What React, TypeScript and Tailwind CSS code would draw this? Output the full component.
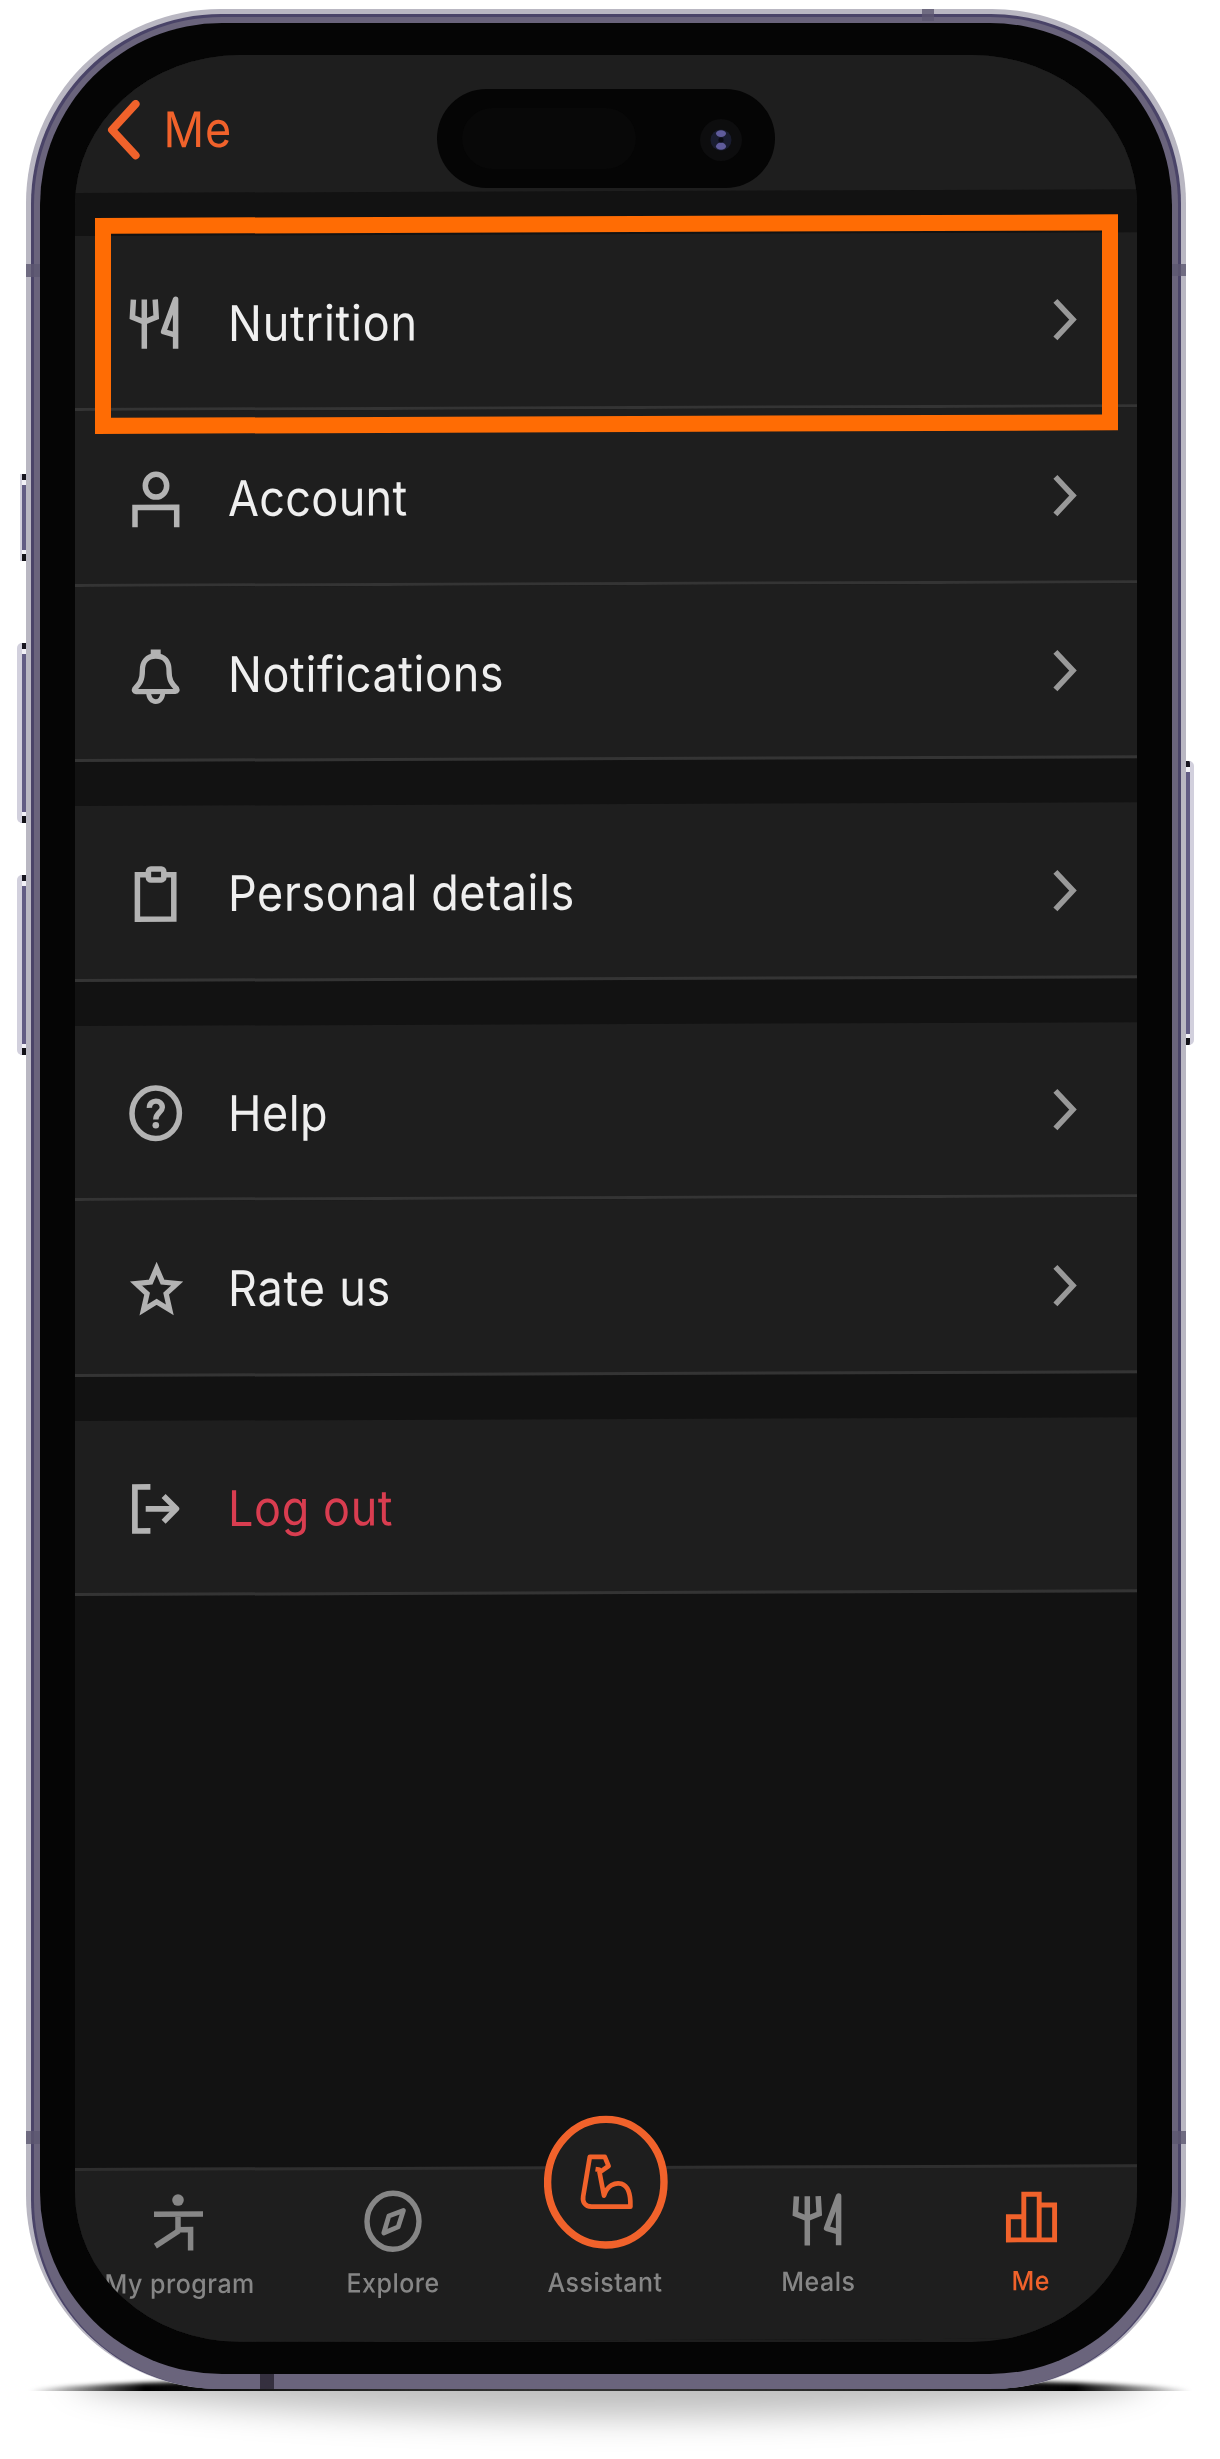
import React from "react";

type IconProps = { className?: string };

const svgBase = {
  fill: "none",
  stroke: "currentColor",
  strokeWidth: 5.5,
} as const;

function CutleryIcon({ className = "h-[60px] w-[60px]" }: IconProps) {
  return (
    <svg viewBox="0 0 60 60" className={`shrink-0 overflow-visible ${className}`} {...svgBase}>
      <path d="M8.4 6.8 L7.4 24.4 L19.3 29.2 L31.2 24.4 L30.2 6.8 M19.3 6.8 V56" />
      <path d="M50.6 56 V6.6 L38.6 38.9 L50.6 42.5" strokeLinejoin="round" />
    </svg>
  );
}

function AccountIcon() {
  return (
    <svg viewBox="0 0 60 60" className="h-[60px] w-[60px] shrink-0 overflow-visible" {...svgBase}>
      <ellipse cx="31" cy="17" rx="10.7" ry="11.4" />
      <path d="M10 58.5 V38.6 H51.7 V58.5" />
    </svg>
  );
}

function BellIcon() {
  return (
    <svg viewBox="0 0 60 60" className="h-[60px] w-[60px] shrink-0 overflow-visible" {...svgBase} strokeWidth={5.3}>
      <path d="M25.7 5.8 H35.7 V13 H25.7 Z" fill="currentColor" stroke="none" />
      <path
        d="M30.7 12.3 C22 12.3 17.4 18 17.4 26.5 C17.4 36.5 15 39.5 9.8 45 C9 46.5 9.5 47.8 11 47.8 H50.4 C51.9 47.8 52.4 46.5 51.6 45 C46.4 39.5 44 36.5 44 26.5 C44 18 39.4 12.3 30.7 12.3 Z"
        strokeLinejoin="round"
      />
      <path d="M23.6 48.5 C23.6 61 37.8 61 37.8 48.5" strokeWidth={4.8} />
    </svg>
  );
}

function ClipboardIcon() {
  return (
    <svg viewBox="0 0 60 60" className="h-[60px] w-[60px] shrink-0 overflow-visible" {...svgBase}>
      <path d="M22.5 11 H12.4 V55.4 H48.8 V11 H39.5" />
      <rect x="23.4" y="5.2" width="15.4" height="11" rx="2.5" />
    </svg>
  );
}

function HelpIcon() {
  return (
    <svg viewBox="0 0 60 60" className="h-[60px] w-[60px] shrink-0 overflow-visible" {...svgBase}>
      <ellipse cx="30.7" cy="30.6" rx="23.7" ry="25.2" />
      <path d="M24.4 25.1 C24.2 16.2 37.5 16.2 37.3 24.8 C37.2 29.6 30.8 29.8 30.8 36.8" strokeWidth={5.4} />
      <circle cx="30.8" cy="42.6" r="3.3" fill="currentColor" stroke="none" />
    </svg>
  );
}

function StarIcon() {
  return (
    <svg viewBox="0 0 60 60" className="h-[60px] w-[60px] shrink-0 overflow-visible" {...svgBase} strokeWidth={5.2}>
      <path d="M31.6 9.6 L37.5 23.4 L52.2 24.8 L41.1 35 L44.8 51.2 L31.6 43 L18.4 51.2 L22.1 35 L11 24.8 L25.7 23.4 Z" />
    </svg>
  );
}

function LogoutIcon() {
  return (
    <svg viewBox="0 0 60 60" className="h-[60px] w-[60px] shrink-0 overflow-visible" {...svgBase} strokeWidth={5.7}>
      <path d="M25.4 9.2 H9.9 V53.2 H25.4" />
      <path d="M20.7 31.2 H52" />
      <path d="M38.6 18.4 L51.4 31.2 L38.6 44" strokeLinejoin="round" />
    </svg>
  );
}

function RowChevron() {
  return (
    <svg viewBox="0 0 24 42" className="h-[42px] w-[24px] shrink-0 overflow-visible text-[#999999]" {...svgBase}>
      <path d="M2.4 2.2 L20 21 L2.4 39.8" />
    </svg>
  );
}

function ProgramIcon() {
  return (
    <svg viewBox="0 0 66 66" className="h-[66px] w-[66px] overflow-visible" {...svgBase}>
      <circle cx="31" cy="11.4" r="5.8" fill="currentColor" stroke="none" />
      <path d="M7 25.5 H56 M31 25.5 V42.5 M31 41 H43.6 V62" />
      <path d="M32 42 L8.4 57.4" />
    </svg>
  );
}

function CompassIcon() {
  return (
    <svg viewBox="0 0 66 66" className="h-[66px] w-[66px] overflow-visible" {...svgBase} strokeWidth={5.4}>
      <ellipse cx="33" cy="33.4" rx="26" ry="28" />
      <path d="M43.4 22.6 L38.2 39 L23.8 45 L28.8 28.2 Z" strokeWidth={4.8} strokeLinejoin="round" />
    </svg>
  );
}

function BarsIcon() {
  return (
    <svg viewBox="0 0 66 66" className="h-[66px] w-[66px] overflow-visible" {...svgBase} strokeWidth={4.9}>
      <path d="M10.4 31 H25.8 V54.2 H10.4 Z M25.8 8.6 H41.2 V54.2 H25.8 Z M41.2 19.4 H56.6 V54.2 H41.2 Z" />
    </svg>
  );
}

function AssistantBadge() {
  return (
    <svg
      viewBox="0 0 124 134"
      className="absolute inset-x-0 -top-[54px] mx-auto h-[134px] w-[124px] text-[#f1622b]"
      {...svgBase}
    >
      <ellipse cx="61.8" cy="67" rx="58.2" ry="62.8" fill="#1e1e1e" strokeWidth={7.4} />
      <path
        d="M51.5 54 L55 54.5 L60 80.5 C63 70.5 71 67 77.4 68.7 C84.5 71 86.8 79.5 86.4 91.5 H47.6 C40.6 91.5 38.4 86.5 39.2 81 L45.8 41.7 H60.8 L64.6 50.9 L56.6 56.5"
        strokeWidth={4.7}
        strokeLinejoin="round"
      />
    </svg>
  );
}

type Item = { label: string; icon: React.ReactNode; tone?: string; track: string; chevron?: boolean };

const groups: Item[][] = [
  [
    { label: "Nutrition", icon: <CutleryIcon />, track: "tracking-[0.75px]", chevron: true },
    { label: "Account", icon: <AccountIcon />, track: "tracking-[0.3px]", chevron: true },
    { label: "Notifications", icon: <BellIcon />, track: "tracking-[0.6px]", chevron: true },
  ],
  [{ label: "Personal details", icon: <ClipboardIcon />, track: "tracking-[0.6px]", chevron: true }],
  [
    { label: "Help", icon: <HelpIcon />, track: "tracking-[0.5px]", chevron: true },
    { label: "Rate us", icon: <StarIcon />, track: "tracking-[0.8px]", chevron: true },
  ],
  [{ label: "Log out", icon: <LogoutIcon />, track: "tracking-[0.6px]", tone: "text-[#d93d50]" }],
];

function MenuRow({ item }: { item: Item }) {
  return (
    <div className="flex h-[175.5px] items-center border-b-[3px] border-[#343434] bg-[#1e1e1e] pt-[3px] pr-[60px] pl-[50px] text-[#b3b3b3]">
      {item.icon}
      <span
        className={`ml-[43px] flex-1 origin-center scale-y-[1.09] text-[45px] leading-[61px] whitespace-nowrap ${item.track} ${item.tone ?? "text-[#efefef]"}`}
      >
        {item.label}
      </span>
      {item.chevron && <RowChevron />}
    </div>
  );
}

const tabs = [
  { label: "My program", icon: <ProgramIcon />, shift: "pr-[3px]" },
  { label: "Explore", icon: <CompassIcon />, shift: "pr-[1px]" },
  { label: "Assistant", icon: <div className="h-[66px]" />, badge: true, shift: "pr-[2px]" },
  { label: "Meals", icon: <div className="flex h-[66px] items-center"><CutleryIcon /></div>, shift: "" },
  { label: "Me", icon: <BarsIcon />, active: true, shift: "" },
];

function TabBar() {
  return (
    <nav className="mt-auto flex h-[174px] border-t-[3px] border-[#2e2e2e] bg-[#1e1e1e]">
      {tabs.map((t) => (
        <div
          key={t.label}
          className={`relative flex w-1/5 flex-col items-center pt-[17.5px] ${t.shift} ${t.active ? "text-[#f1622b]" : "text-[#868686]"}`}
        >
          {t.badge && <AssistantBadge />}
          {t.icon}
          <span className="mt-[14.5px] scale-y-[1.06] text-[25px] leading-[30px] font-medium tracking-[0.5px] whitespace-nowrap">
            {t.label}
          </span>
        </div>
      ))}
    </nav>
  );
}

function DynamicIsland() {
  return (
    <div className="absolute inset-x-0 top-[34px] mx-auto flex h-[99px] w-[338px] items-center justify-between rounded-full bg-[#050505] pr-[32px] pl-[25px]">
      <div className="h-[61px] w-[174px] rounded-full bg-[#080808]" />
      <svg viewBox="0 0 44 44" className="mt-[2px] h-[44px] w-[44px]">
        <circle cx="22" cy="22" r="21" fill="#0d0d0e" />
        <circle cx="22" cy="22" r="10.5" fill="#191c30" />
        <ellipse cx="22" cy="15.6" rx="5" ry="3.4" fill="#5f5b9c" />
        <ellipse cx="22" cy="28.2" rx="5" ry="3.6" fill="#5f5b9c" />
        <circle cx="22" cy="22" r="2.6" fill="#0b0b14" />
      </svg>
    </div>
  );
}

function SideButton({ className }: { className: string }) {
  return (
    <div className={`flex flex-col overflow-hidden border-[#d2d0dd] bg-[#625c84] ${className}`}>
      <div className="h-[6px] bg-[#17151f]" />
      <div className="h-[5px] bg-[#f1f0f6]" />
      <div className="flex-1" />
      <div className="h-[4px] bg-[#f1f0f6]" />
      <div className="h-[7px] bg-[#111016]" />
    </div>
  );
}

/* Pairs of antenna breaks on the two long edges. */
function AntennaBands() {
  return (
    <div className="absolute inset-0 flex flex-col justify-between pt-[255px] pb-[245px]">
      <div className="flex justify-between">
        <div className="h-[13px] w-[14px] bg-[#5d5870]/80" />
        <div className="h-[12px] w-[14px] bg-[#5d5870]/80" />
      </div>
      <div className="flex justify-between">
        <div className="h-[13px] w-[14px] bg-[#5d5870]/80" />
        <div className="h-[13px] w-[14px] bg-[#5d5870]/80" />
      </div>
    </div>
  );
}

function GroundShadow() {
  return (
    <div className="absolute inset-0 flex flex-col justify-end">
      <div className="h-[31px] overflow-hidden pt-[17px]">
        <div className="mx-auto h-[30px] w-[1164px] rounded-[50%] bg-linear-to-r from-transparent from-0% via-black via-10% to-transparent to-100% blur-[2px]" />
        <div className="mx-auto -mt-[30px] h-[30px] w-[1164px] rounded-[50%] bg-linear-to-l from-transparent from-0% via-black via-10% to-transparent to-100% blur-[2px]" />
      </div>
      <div className="h-[68px] overflow-hidden">
        <div className="mx-auto -mt-[58px] h-[84px] w-[1080px] rounded-[50%] bg-black/25 blur-[16px]" />
      </div>
    </div>
  );
}

export default function App() {
  return (
    <div className="relative flex h-[2459px] w-[1220px] items-start overflow-hidden bg-white pt-[9px] font-['Inter','Liberation_Sans',sans-serif]">
      <GroundShadow />

      <div className="flex w-[26px] shrink-0 flex-col items-end pt-[465px]">
        <SideButton className="h-[87px] w-[6px] border-l-2" />
        <SideButton className="mt-[82px] h-[180px] w-[9px] rounded-l-[5px] border-l-[5px]" />
        <SideButton className="mt-[52px] h-[180px] w-[9px] rounded-l-[5px] border-l-[5px]" />
      </div>

      {/* metal frame, from the outer highlight in to the glass */}
      <div className="relative h-[2380px] w-[1160px] shrink-0 rounded-[194px] bg-[#b9b7c2] px-[5px] pt-[5px]">
        <div className="h-full rounded-[190px] bg-[#4a4468] px-[3px] pt-[3px]">
          <div className="h-full rounded-[188px] bg-[#6a647c] px-[6px] pt-[6px] pb-[15px]">
            <div className="h-full rounded-[182px] bg-[#050505] px-[35px] pt-[32px] pb-[32px]">
              <div className="relative h-full overflow-hidden rounded-[165px/150px] bg-[#1e1e1e]">
                <div className="relative flex h-full origin-top-left -skew-y-[0.2deg] flex-col bg-[#121212]">
                  <header className="flex h-[138px] shrink-0 items-start bg-[#1e1e1e] pt-[45px] pl-[32px] text-[#f1622b]">
                    <svg
                      viewBox="0 0 34 60"
                      className="h-[60px] w-[34px]"
                      {...svgBase}
                      strokeWidth={8}
                      strokeLinecap="round"
                      strokeLinejoin="round"
                    >
                      <path d="M28.6 4.2 L5 30 L28.6 55.6" />
                    </svg>
                    <span className="ml-[22.5px] scale-y-[1.09] text-[45px] leading-[60px] tracking-[0.8px]">Me</span>
                  </header>
                  <div className="flex flex-col gap-[44px] pt-[42.5px]">
                    {groups.map((g) => (
                      <section key={g[0].label} className="flex flex-col">
                        {g.map((item) => (
                          <MenuRow key={item.label} item={item} />
                        ))}
                      </section>
                    ))}
                  </div>
                  <TabBar />
                  <div className="pointer-events-none absolute top-[163.4px] left-[20px] h-[216px] w-[1023px] border-[16px] border-[#ff6c04]" />
                </div>
                <DynamicIsland />
              </div>
            </div>
          </div>
        </div>

        <AntennaBands />
        <div className="absolute top-0 left-[896px] h-[12px] w-[12px] bg-[#5d5870]/80" />
        <div className="absolute bottom-0 left-[234px] h-[15px] w-[14px] bg-[#35303f]" />
      </div>

      <div className="flex shrink-0 flex-col items-start pt-[752px]">
        <SideButton className="h-[284px] w-[8px] rounded-r-[5px] border-r-[4px]" />
      </div>
    </div>
  );
}
